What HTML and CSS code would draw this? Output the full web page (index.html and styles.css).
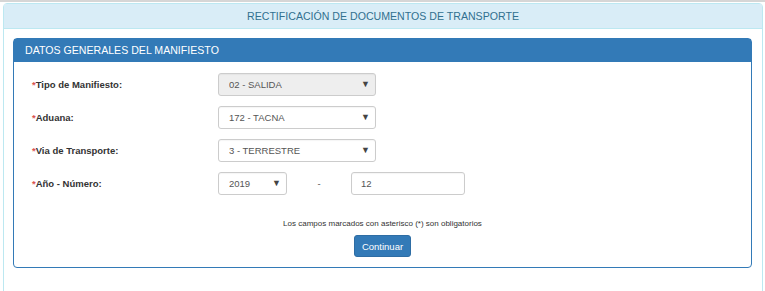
FILE: index.html
```html
<!DOCTYPE html>
<html lang="es">
<head>
  <meta charset="UTF-8">
  <meta name="viewport" content="width=device-width, initial-scale=1.0">
  <title>Rectificación de Documentos de Transporte</title>
  <link rel="stylesheet" href="styles.css">
</head>
<body>

  <div class="panel panel-info">
    <div class="panel-heading">RECTIFICACIÓN DE DOCUMENTOS DE TRANSPORTE</div>

    <div class="panel-body">
      <!-- Datos generales -->
      <form class="panel panel-primary" onsubmit="event.preventDefault()">
        <div class="panel-heading">DATOS GENERALES DEL MANIFIESTO</div>

        <div class="panel-body">
          <div class="form-row">
            <label><span class="req">*</span>Tipo de Manifiesto:</label>
            <div class="select-wrap wide">
              <select disabled>
                <option>02 - SALIDA</option>
              </select>
            </div>
          </div>

          <div class="form-row">
            <label><span class="req">*</span>Aduana:</label>
            <div class="select-wrap wide">
              <select>
                <option>172 - TACNA</option>
              </select>
            </div>
          </div>

          <div class="form-row">
            <label><span class="req">*</span>Via de Transporte:</label>
            <div class="select-wrap wide">
              <select>
                <option>3 - TERRESTRE</option>
              </select>
            </div>
          </div>

          <div class="form-row">
            <label><span class="req">*</span>Año - Número:</label>
            <div class="select-wrap short">
              <select>
                <option>2019</option>
              </select>
            </div>
            <span class="dash">-</span>
            <input type="text" class="numero" value="12">
          </div>

          <p class="note">Los campos marcados con asterisco (*) son obligatorios</p>
          <div class="actions">
            <button type="submit">Continuar</button>
          </div>
        </div>
      </form>
    </div>
  </div>

</body>
</html>
```

FILE: styles.css
```css
/* General Reset */
* {
  margin: 0;
  padding: 0;
  box-sizing: border-box;
}

body {
  font-family: "Liberation Sans", Arial, sans-serif;
  font-size: 9.5px;
  color: #333;
  background: #fff;
  border-top: 2px solid #d6d6d6;
  padding: 1px 2px 0 3px;
}

.panel {
  border: 1px solid transparent;
  border-radius: 4px;
  background: #fff;
}

.panel-info {
  border-color: #bce8f1;
  height: 300px;
}

.panel-info > .panel-heading {
  background: #d9edf7;
  color: #31708f;
  font-size: 10.6px;
  text-align: center;
  height: 25px;
  line-height: 25px;
  border-bottom: 1px solid #bce8f1;
}

.panel-info > .panel-body {
  padding: 9px 10px 0 9px;
}

.panel-primary {
  display: block;
  border-color: #337ab7;
}

.panel-primary > .panel-heading {
  background: #337ab7;
  color: #fff;
  font-size: 10.6px;
  height: 23px;
  line-height: 22px;
  padding: 0 11px;
}

.panel-primary > .panel-body {
  padding: 11px 18px 10px;
}

.form-row {
  display: flex;
  align-items: center;
  height: 23px;
  margin-bottom: 10px;
}

.form-row label {
  width: 186px;
  font-weight: bold;
  color: #333;
}

.req {
  color: #d9534f;
}

.select-wrap {
  position: relative;
  height: 23px;
}

.select-wrap.wide {
  width: 158px;
}

.select-wrap.short {
  width: 69px;
}

.select-wrap::after {
  content: "\25BC";
  position: absolute;
  right: 6px;
  top: 6px;
  font-size: 9px;
  color: #444;
  pointer-events: none;
}

select,
input {
  font-family: inherit;
  font-size: 9.5px;
  color: #555;
  width: 100%;
  height: 23px;
  padding: 0 10px;
  border: 1px solid #ccc;
  border-radius: 3px;
  background: #fff;
  appearance: none;
  -webkit-appearance: none;
  box-shadow: inset 0 1px 1px rgba(0, 0, 0, 0.04);
}

select:disabled {
  background: #eee;
  opacity: 1;
}

.dash {
  width: 64px;
  text-align: center;
  color: #555;
}

input.numero {
  width: 114px;
  padding: 0 9px;
}

.note {
  text-align: center;
  font-size: 8px;
  color: #333;
  margin-top: 24px;
}

.actions {
  text-align: center;
  margin-top: 7px;
}

button {
  background: #337ab7;
  color: #fff;
  border: 1px solid #2e6da4;
  border-radius: 3px;
  font-family: inherit;
  font-size: 9.5px;
  height: 22px;
  padding: 0 7px;
  cursor: pointer;
}

button:hover {
  background: #286090;
}
```
